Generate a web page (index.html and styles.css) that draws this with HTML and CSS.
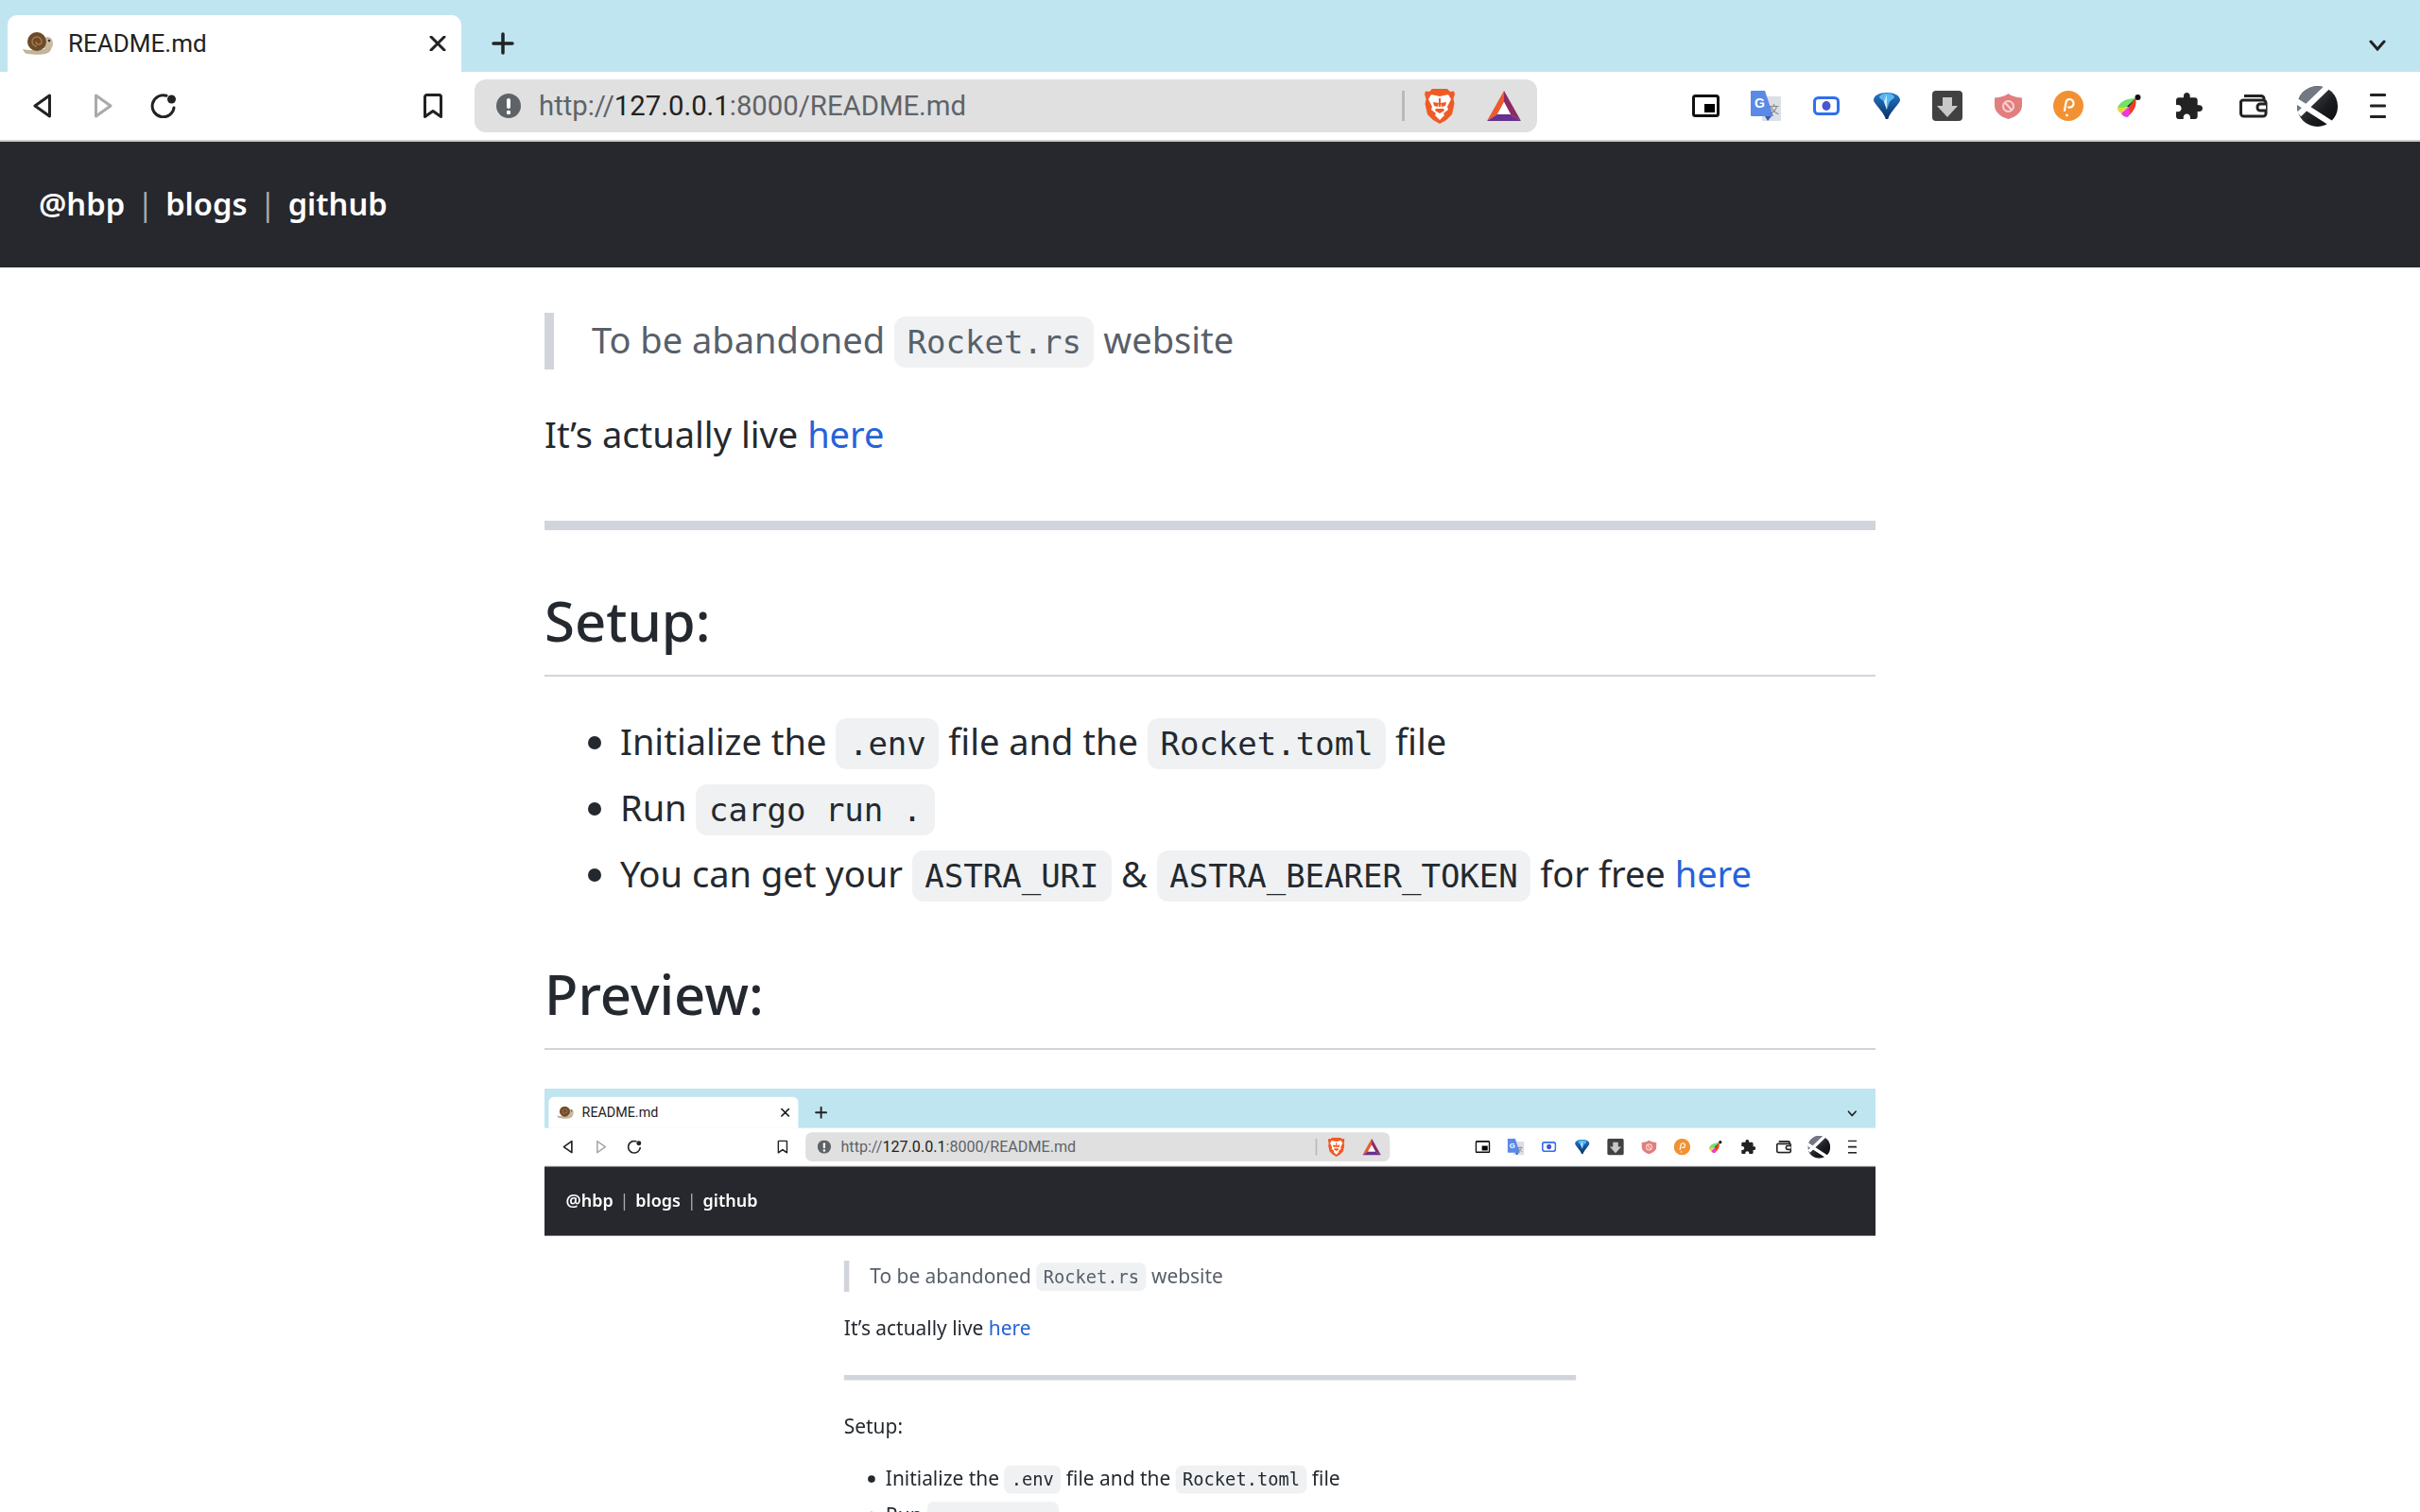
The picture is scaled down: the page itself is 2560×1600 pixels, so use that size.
FILE: index.html
```html
<!DOCTYPE html>
<html lang="en">
<head>
<meta charset="utf-8">
<title>README.md</title>
<link rel="stylesheet" href="styles.css">
</head>
<body>
<svg class="defs" aria-hidden="true">
  <defs>
    <linearGradient id="gFunnel" x1="0" y1="0" x2="0" y2="1"><stop offset="0" stop-color="#2478c8"/><stop offset="1" stop-color="#0b2f66"/></linearGradient>
    <linearGradient id="gX" x1="0" y1="0" x2="1" y2="1"><stop offset="0" stop-color="#5a5e68"/><stop offset=".6" stop-color="#1b1c20"/><stop offset="1" stop-color="#08090b"/></linearGradient>
    <symbol id="i-snail" viewBox="0 0 32 24">
      <ellipse cx="26.500" cy="12" rx="5.500" ry="7" fill="#c8b9a2"/>
      <path d="M0 18c4 1 8 1 12 1l10-1 8-2c1 3-2 6-6 7-3 1-14 1-18 0-3 0-5-2-6-5z" fill="#c4b49b"/>
      <circle cx="15" cy="10" r="10" fill="#6d4a2a"/>
      <path d="M15 15a5 5 0 1 1 5-5 3 3 0 1 1-6 0" fill="none" stroke="#a77a4c" stroke-width="1.400"/>
      <circle cx="28" cy="9" r="1.300" fill="#333"/>
    </symbol>
    <symbol id="i-back" viewBox="0 0 20 26"><path d="M17.500 2L2 13l15.500 11z" fill="none" stroke="currentColor" stroke-width="3" stroke-linejoin="round"/></symbol>
    <symbol id="i-fwd" viewBox="0 0 20 26"><path d="M2.500 2L18 13 2.500 24z" fill="none" stroke="currentColor" stroke-width="3" stroke-linejoin="round"/></symbol>
    <symbol id="i-reload" viewBox="0 0 28 26"><path d="M17 2.300A11.500 11.500 0 1 0 25 15" fill="none" stroke="currentColor" stroke-width="3" stroke-linecap="round"/><circle cx="22.500" cy="6" r="4.500" fill="currentColor"/></symbol>
    <symbol id="i-book" viewBox="0 0 20 26"><path d="M3.500 1.500h13a2 2 0 0 1 2 2v21L10 18.500 1.500 24.500v-21a2 2 0 0 1 2-2z" fill="none" stroke="currentColor" stroke-width="3" stroke-linejoin="round"/></symbol>
    <symbol id="i-warn" viewBox="0 0 26 26"><circle cx="13" cy="13" r="13" fill="#5f6368"/><rect x="11" y="5" width="4" height="11" rx="2" fill="#fff"/><circle cx="13" cy="20" r="2.200" fill="#fff"/></symbol>
    <symbol id="i-brave" viewBox="0 0 32 37">
      <path d="M8 0h16l3 3 4-.5 1 3-1.500 5 1 5L29 27l-6 6-7 4-7-4-6-6-2.500-11 1-5L0 5.500l1-3 4 .5z" fill="#f05a24"/>
      <path d="M7 6l9 2 9-2 3 5-4 8 1 3-5 4 1 2-5 5-5-5 1-2-5-4 1-3-4-8z" fill="#fff"/>
      <path d="M9 14l6 1-1 4-4-1zM23 14l-6 1 1 4 4-1zM15 10h2v9h-2zM12 21h8l1 2-5 3-5-3z" fill="#f05a24"/>
    </symbol>
    <symbol id="i-bat" viewBox="0 0 36 32">
      <path d="M18 0L0 32l11-7 7-13z" fill="#ee5a2c"/>
      <path d="M18 0l18 32-11-7-7-13z" fill="#8c2a63"/>
      <path d="M0 32h36l-11-7H11z" fill="#66308f"/>
      <path d="M18 12l7 13H11z" fill="#fff"/>
    </symbol>
    <symbol id="i-pip" viewBox="0 0 29 24"><rect x="1.500" y="1.500" width="26" height="21" rx="2" fill="#fff" stroke="#111" stroke-width="3"/><rect x="13" y="10" width="11" height="9" fill="#000"/></symbol>
    <symbol id="i-translate" viewBox="0 0 32 32">
      <rect x="12" y="6" width="20" height="26" rx="1" fill="#dcdfe3"/>
      <path d="M0 1a1 1 0 0 1 1-1h14l9 27H1a1 1 0 0 1-1-1z" fill="#5a8ae8"/>
      <path d="M15 27h7l-4 5z" fill="#3b5bb5"/>
      <text class="glyph-g" x="4" y="18">G</text>
      <text class="glyph-zh" x="19" y="24">文</text>
    </symbol>
    <symbol id="i-record" viewBox="0 0 28 20"><rect x="1.500" y="1.500" width="25" height="17" rx="4" fill="#fff" stroke="#2f6fee" stroke-width="3"/><ellipse cx="14" cy="10" rx="4.500" ry="5" fill="#4a56cc"/></symbol>
    <symbol id="i-funnel" viewBox="0 0 28 28">
      <path d="M14 0C6 0 0 3 0 8c0 3 10 12 12.500 19v1h3v-1C18 20 28 11 28 8c0-5-6-8-14-8z" fill="url(#gFunnel)"/>
      <path d="M14 1C10 1 6 2.500 6 5c1 2 5 3 6 7l2 6 2-6c1-4 5-5 6-7 0-2.500-4-4-8-4z" fill="#5db6ef"/>
      <path d="M14 2l-3 8 3 8z" fill="#c9ecff"/>
    </symbol>
    <symbol id="i-down" viewBox="0 0 32 32"><rect width="32" height="32" rx="4" fill="#414141"/><path d="M11 7h10v9h6L16 28 5 16h6z" fill="#c8c8c8"/></symbol>
    <symbol id="i-shield" viewBox="0 0 29 27"><path d="M14.500 0c3 2.500 8 4 14.500 4.500v8C29 20 22 25 14.500 27 7 25 0 20 0 12.500v-8C6.500 4 11.500 2.500 14.500 0z" fill="#e37e7e"/><circle cx="14.500" cy="13.500" r="5.500" fill="none" stroke="#f6d3d3" stroke-width="2"/><path d="M11 9.500l7 8" stroke="#f6d3d3" stroke-width="2"/></symbol>
    <symbol id="i-polka" viewBox="0 0 32 32"><circle cx="16" cy="16" r="16" fill="#f29134"/><path d="M12 21l1.500-8.500a4 4 0 0 1 4-3.500 4.200 4.200 0 0 1 4 4.500c0 2.500-2 4.500-5.500 4" fill="none" stroke="#fff" stroke-width="2.200" stroke-linecap="round"/><circle cx="14.500" cy="26" r="1.400" fill="#fff"/></symbol>
    <symbol id="i-leaf" viewBox="0 0 25 24">
      <path d="M19 4C9 4 2 8 0 14c3 2 9 1 12-1z" fill="#6fe36a"/>
      <path d="M19 4c2 6-1 14-8 19-3-3-3-6 1-10z" fill="#ef3b24"/>
      <path d="M0 14c0 3 1 5 4 6l8-7z" fill="#e8d93a"/>
      <path d="M4 20c1 2 3 4 7 4l2-4-1-7z" fill="#e93be0"/>
      <path d="M19 4l-7 9-2 0z" fill="#111"/>
      <circle cx="21.500" cy="3" r="3" fill="#111"/>
    </symbol>
    <symbol id="i-puzzle" viewBox="2 1 21 21"><path d="M20.500 11H19V7c0-1.100-.9-2-2-2h-4V3.500C13 2.120 11.880 1 10.500 1S8 2.120 8 3.500V5H4c-1.100 0-1.990.9-1.990 2v3.800H3.500c1.490 0 2.700 1.210 2.700 2.700s-1.210 2.700-2.700 2.700H2V20c0 1.100.9 2 2 2h3.800v-1.500c0-1.490 1.210-2.700 2.700-2.700 1.490 0 2.700 1.210 2.700 2.700V22H17c1.100 0 2-.9 2-2v-4h1.500c1.380 0 2.500-1.120 2.500-2.500S21.880 11 20.500 11z" fill="#222"/></symbol>
    <symbol id="i-wallet" viewBox="0 0 30 25"><path d="M5 1.500h18a3 3 0 0 1 3 3v2M1.500 7.500A3 3 0 0 1 4.500 6H25a3 3 0 0 1 3 3v11a3 3 0 0 1-3 3H4.500a3 3 0 0 1-3-3z" fill="none" stroke="#222" stroke-width="3"/><path d="M28 10h-6a3 3 0 0 0-3 3v1a3 3 0 0 0 3 3h6" fill="#fff" stroke="#222" stroke-width="3"/></symbol>
    <symbol id="i-x" viewBox="0 0 43 43">
      <circle cx="21.500" cy="21.500" r="21.500" fill="url(#gX)"/>
      <path d="M31 2.300A21.500 21.500 0 0 0 2 30z" fill="#737885"/>
      <path d="M-1 15.700L39 41.500M2 30L33 0" stroke="#fff" stroke-width="6" fill="none"/>
    </symbol>
    <symbol id="i-menu" viewBox="0 0 17 26"><rect y="0" width="17" height="3" rx="1" fill="#222"/><rect y="11.500" width="17" height="3" rx="1" fill="#222"/><rect y="23" width="17" height="3" rx="1" fill="#222"/></symbol>
  </defs>
</svg>

<div class="chrome">
  <div class="tabstrip">
    <div class="tab">
      <svg class="ic-snail"><use href="#i-snail"/></svg>
      <span class="tab-title">README.md</span>
      <svg class="ic-close" viewBox="0 0 18 16"><path d="M2 1l14 14M16 1L2 15" stroke="#222" stroke-width="3" stroke-linecap="round"/></svg>
    </div>
    <svg class="ic-plus" viewBox="0 0 24 24"><path d="M12 2v20M2 12h20" stroke="#222" stroke-width="3.500" stroke-linecap="round"/></svg>
    <svg class="ic-chevron" viewBox="0 0 18 12"><path d="M2 2l7 8 7-8" fill="none" stroke="#222" stroke-width="3" stroke-linecap="round"/></svg>
  </div>
  <div class="toolbar">
    <span class="slot"><svg class="ic-nav dark"><use href="#i-back"/></svg></span>
    <span class="slot"><svg class="ic-nav muted"><use href="#i-fwd"/></svg></span>
    <span class="slot"><svg class="ic-reload dark"><use href="#i-reload"/></svg></span>
    <span class="slot slot-book"><svg class="ic-nav dark"><use href="#i-book"/></svg></span>
    <div class="urlbar">
      <svg class="ic-warn"><use href="#i-warn"/></svg>
      <span class="url">http://<b>127.0.0.1</b>:8000/README.md</span>
      <i class="url-sep"></i>
      <svg class="ic-brave"><use href="#i-brave"/></svg>
      <svg class="ic-bat"><use href="#i-bat"/></svg>
    </div>
    <div class="extensions">
      <span class="slot"><svg class="ic-pip"><use href="#i-pip"/></svg></span>
      <span class="slot"><svg class="ic-32"><use href="#i-translate"/></svg></span>
      <span class="slot"><svg class="ic-record"><use href="#i-record"/></svg></span>
      <span class="slot"><svg class="ic-28"><use href="#i-funnel"/></svg></span>
      <span class="slot"><svg class="ic-32"><use href="#i-down"/></svg></span>
      <span class="slot"><svg class="ic-shield"><use href="#i-shield"/></svg></span>
      <span class="slot"><svg class="ic-32"><use href="#i-polka"/></svg></span>
      <span class="slot"><svg class="ic-leaf"><use href="#i-leaf"/></svg></span>
      <span class="slot"><svg class="ic-28"><use href="#i-puzzle"/></svg></span>
      <span class="slot slot-w"><svg class="ic-wallet"><use href="#i-wallet"/></svg></span>
      <span class="slot slot-x"><svg class="ic-x"><use href="#i-x"/></svg></span>
      <span class="slot"><svg class="ic-menu"><use href="#i-menu"/></svg></span>
    </div>
  </div>
</div>
<nav class="site-nav"><a>@hbp</a><span class="bar">|</span><a>blogs</a><span class="bar">|</span><a>github</a></nav>
<main class="markdown">
  <blockquote><p>To be abandoned <code>Rocket.rs</code> website</p></blockquote>
  <p>It’s actually live <a class="link">here</a></p>
  <hr>
  <h2>Setup:</h2>
  <ul>
    <li>Initialize the <code>.env</code> file and the <code>Rocket.toml</code> file</li>
    <li>Run <code>cargo run .</code></li>
    <li>You can get your <code>ASTRA_URI</code> &amp; <code>ASTRA_BEARER_TOKEN</code> for free <a class="link">here</a></li>
  </ul>
  <h2>Preview:</h2>
  <div class="shot">
    <div class="shot-page">
      <div class="chrome">
        <div class="tabstrip">
          <div class="tab">
            <svg class="ic-snail"><use href="#i-snail"/></svg>
            <span class="tab-title">README.md</span>
            <svg class="ic-close" viewBox="0 0 18 16"><path d="M2 1l14 14M16 1L2 15" stroke="#222" stroke-width="3" stroke-linecap="round"/></svg>
          </div>
          <svg class="ic-plus" viewBox="0 0 24 24"><path d="M12 2v20M2 12h20" stroke="#222" stroke-width="3.500" stroke-linecap="round"/></svg>
          <svg class="ic-chevron" viewBox="0 0 18 12"><path d="M2 2l7 8 7-8" fill="none" stroke="#222" stroke-width="3" stroke-linecap="round"/></svg>
        </div>
        <div class="toolbar">
          <span class="slot"><svg class="ic-nav dark"><use href="#i-back"/></svg></span>
          <span class="slot"><svg class="ic-nav muted"><use href="#i-fwd"/></svg></span>
          <span class="slot"><svg class="ic-reload dark"><use href="#i-reload"/></svg></span>
          <span class="slot slot-book"><svg class="ic-nav dark"><use href="#i-book"/></svg></span>
          <div class="urlbar">
            <svg class="ic-warn"><use href="#i-warn"/></svg>
            <span class="url">http://<b>127.0.0.1</b>:8000/README.md</span>
            <i class="url-sep"></i>
            <svg class="ic-brave"><use href="#i-brave"/></svg>
            <svg class="ic-bat"><use href="#i-bat"/></svg>
          </div>
          <div class="extensions">
            <span class="slot"><svg class="ic-pip"><use href="#i-pip"/></svg></span>
            <span class="slot"><svg class="ic-32"><use href="#i-translate"/></svg></span>
            <span class="slot"><svg class="ic-record"><use href="#i-record"/></svg></span>
            <span class="slot"><svg class="ic-28"><use href="#i-funnel"/></svg></span>
            <span class="slot"><svg class="ic-32"><use href="#i-down"/></svg></span>
            <span class="slot"><svg class="ic-shield"><use href="#i-shield"/></svg></span>
            <span class="slot"><svg class="ic-32"><use href="#i-polka"/></svg></span>
            <span class="slot"><svg class="ic-leaf"><use href="#i-leaf"/></svg></span>
            <span class="slot"><svg class="ic-28"><use href="#i-puzzle"/></svg></span>
            <span class="slot slot-w"><svg class="ic-wallet"><use href="#i-wallet"/></svg></span>
            <span class="slot slot-x"><svg class="ic-x"><use href="#i-x"/></svg></span>
            <span class="slot"><svg class="ic-menu"><use href="#i-menu"/></svg></span>
          </div>
        </div>
      </div>
      <nav class="site-nav"><a>@hbp</a><span class="bar">|</span><a>blogs</a><span class="bar">|</span><a>github</a></nav>
      <div class="markdown">
        <blockquote><p>To be abandoned <code>Rocket.rs</code> website</p></blockquote>
        <p>It’s actually live <a class="link">here</a></p>
        <hr>
        <p>Setup:</p>
        <ul>
          <li>Initialize the <code>.env</code> file and the <code>Rocket.toml</code> file</li>
          <li>Run <code>cargo run .</code></li>
        </ul>
      </div>
    </div>
  </div>
</main>
</body>
</html>
```

FILE: styles.css
```css
* { box-sizing: border-box; }
html, body { margin: 0; height: 1600px; overflow: hidden; background: #fff; }
body { font-family: "Noto Sans", sans-serif; color: #24292f; }
.defs { position: absolute; width: 0; height: 0; }

.chrome { height: 150px; border-bottom: 2px solid #cccccc; }
.tabstrip { height: 76px; background: #bfe5f1; padding: 16px 16px 0 8px; display: flex; align-items: flex-start; }
.tab { width: 480px; height: 60px; background: #fff; border-radius: 10px 10px 0 0; display: flex; align-items: center; padding: 0 16px; }
.ic-snail { width: 32px; height: 24px; }
.tab-title { font: 26px Roboto, sans-serif; color: #222; margin-left: 16px; }
.ic-close { width: 18px; height: 16px; margin-left: auto; }
.ic-plus { width: 24px; height: 24px; margin: 18px 0 0 32px; }
.ic-chevron { width: 18px; height: 12px; margin: 26px 20px 0 auto; }

.toolbar { height: 72px; display: flex; align-items: center; padding: 0 13px; background: #fff; }
.slot { width: 64px; height: 44px; flex: none; display: flex; align-items: center; justify-content: center; }
.slot-book { margin-left: 221px; }
.dark { color: #222; }
.muted { color: #aaa; }
.ic-nav { width: 20px; height: 26px; }
.ic-reload { width: 28px; height: 26px; }

.urlbar { width: 1124px; height: 56px; margin-left: 12px; background: #e0e0e0; border-radius: 12px; display: flex; align-items: center; padding: 0 17px 0 23px; }
.ic-warn { width: 26px; height: 26px; }
.url { font: 29.300px Roboto, sans-serif; color: #5f6368; margin-left: 19px; }
.url b { font-weight: 400; color: #222; }
.url-sep { width: 3px; height: 32px; background: #b9b9b9; margin-left: auto; }
.ic-brave { width: 32px; height: 37px; margin-left: 21px; }
.ic-bat { width: 36px; height: 32px; margin-left: 34px; }

.extensions { display: flex; margin-left: auto; }
.slot-w { margin-left: 4px; }
.slot-x { margin-left: 3px; }
.ic-pip { width: 29px; height: 24px; }
.ic-32 { width: 32px; height: 32px; }
.ic-28 { width: 28px; height: 28px; }
.ic-record { width: 28px; height: 20px; }
.ic-shield { width: 29px; height: 27px; }
.ic-leaf { width: 25px; height: 24px; }
.ic-wallet { width: 30px; height: 25px; }
.ic-x { width: 43px; height: 43px; }
.ic-menu { width: 17px; height: 26px; }
.glyph-g { font: 700 14px "Liberation Sans", sans-serif; fill: #fff; }
.glyph-zh { font: 11px "Noto Sans CJK SC", sans-serif; fill: #777; }

.site-nav { height: 133px; background: #26282d; color: #fff; display: flex; align-items: center; padding: 0 0 2px 41px; gap: 12.500px; font-size: 32.700px; font-weight: 600; }
.site-nav .bar { color: #aaa; font-weight: 400; }

.markdown { width: 1408px; margin: 0 auto; padding-top: 48px; font-size: 38px; }
.markdown p, .markdown li { line-height: 56px; padding-bottom: 4px; }
.markdown p { margin: 0 0 40px; }
blockquote { margin: 0 0 40px; border-left: 10px solid #d1d5db; padding: 0 40px; color: #57606a; }
.markdown blockquote p { margin: 0; }
code { font-family: "DejaVu Sans Mono", monospace; font-size: 34px; line-height: 1; background: #eff1f3; border-radius: 12px; padding: 7px 13.600px; }
.link { color: #2563d9; }
hr { height: 10px; margin: 60px 0; border: 0; background: #d1d5db; }
h2 { font-size: 58px; font-weight: 500; line-height: 71px; margin: 60px 0 40px; padding-bottom: 22px; border-bottom: 2px solid #d1d5db; }
hr + h2 { margin-top: 0; }
ul { margin: 0 0 40px; padding-left: 80px; }
li + li { margin-top: 10px; }

.shot { height: 448px; margin-top: 41px; overflow: hidden; }
.shot-page { width: 2560px; transform: scale(.55); transform-origin: 0 0; }
```
